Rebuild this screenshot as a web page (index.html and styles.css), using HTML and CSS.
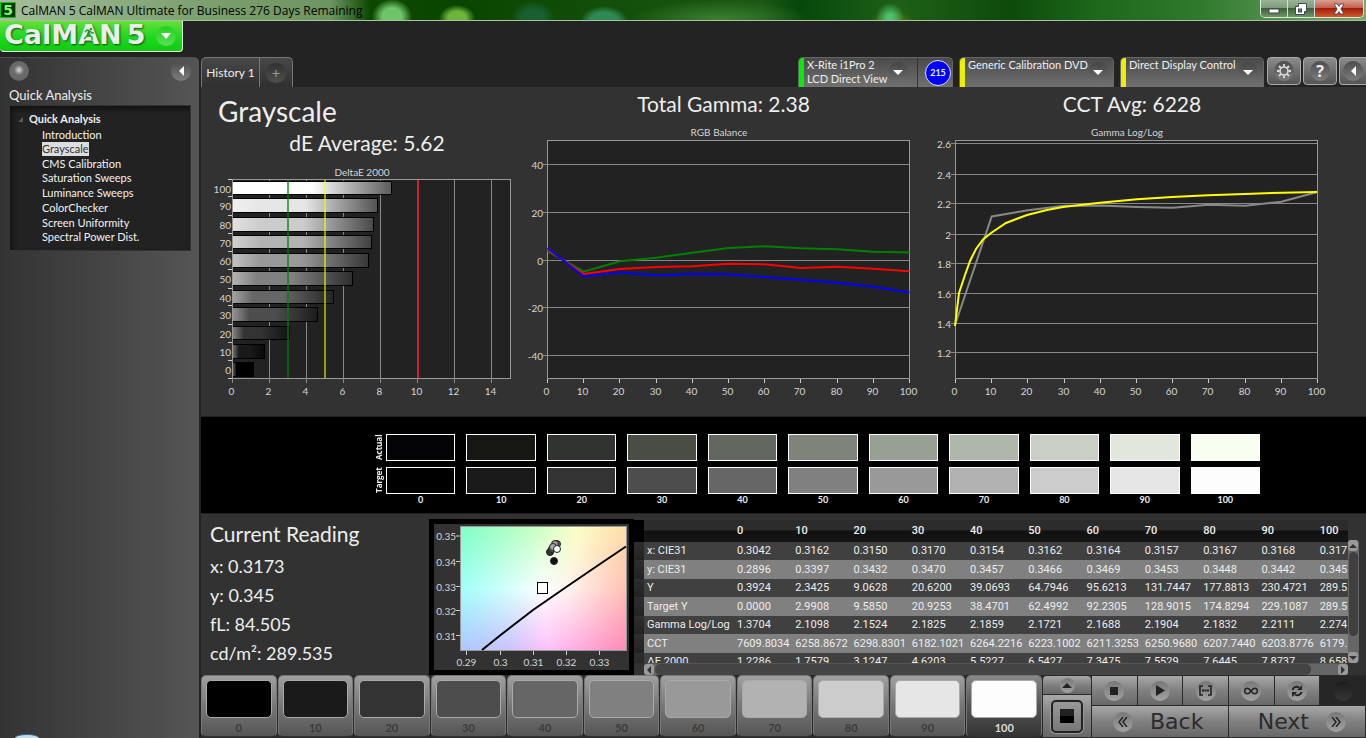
FILE: index.html
```html
<!DOCTYPE html>
<html lang="en">
<head>
<meta charset="utf-8">
<title>CalMAN 5</title>
<link rel="stylesheet" href="styles.css">
</head>
<body>
<div class="app">
  <header class="titlebar">
    <span class="app-icon">5</span>
    <span class="titlebar-text">CalMAN 5 CalMAN Ultimate for Business 276 Days Remaining</span>
    <div class="window-buttons">
      <button class="win-btn" aria-label="Minimize"><svg width="12" height="12" viewBox="0 0 12 12"><rect x="1" y="6" width="10" height="4" fill="#fff" stroke="#445" stroke-width="1"/></svg></button>
      <button class="win-btn" aria-label="Restore"><svg width="12" height="12" viewBox="0 0 12 12"><path d="M3.500.5h8v8h-2v3h-9v-8h3z" fill="#fff" stroke="#445"/><rect x="3.500" y="6" width="3" height="3" fill="#687" stroke="#445"/></svg></button>
      <button class="win-btn win-close" aria-label="Close"><svg width="12" height="12" viewBox="0 0 12 12"><path d="M1 1h3.400L6 3.400 7.600 1H11L7.900 6 11 11H7.600L6 8.600 4.400 11H1l3.100-5z" fill="#fff" stroke="#434" stroke-width=".8"/></svg></button>
    </div>
  </header>

  <div class="workspace">
    <aside class="left">
      <button class="logo" aria-label="CalMAN 5 menu">
        <span class="logo-text">CalMAN</span><span class="logo-text logo-five">5</span>
        <svg class="logo-runner" width="14" height="17" viewBox="0 0 14 17"><path d="M8 6 5 5 3 7M8 6l-2 4-4 4M7 10l3 2v3M8 6l2 2h2" fill="none" stroke="#1da51d" stroke-width="1.400"/><circle cx="9" cy="4" r="1.300" fill="#1da51d"/></svg>
        <span class="logo-drop"><svg width="10" height="6" viewBox="0 0 10 6"><path d="M0 0h10L5 6z" fill="#fff"/></svg></span>
      </button>
      <nav class="sidebar">
        <div class="side-top">
          <button class="round orb" aria-label="Record"></button>
          <button class="round" aria-label="Collapse panel"><svg width="5" height="10" viewBox="0 0 5 10"><path d="M5 0v10L0 5z" fill="#fff"/></svg></button>
        </div>
        <h2 class="side-title">Quick Analysis</h2>
        <div class="tree">
          <div class="tree-root"><svg width="5" height="5" viewBox="0 0 5 5"><path d="M5 0v5H0z" fill="#555"/></svg>Quick Analysis</div>
          <ul class="tree-list">
            <li><a href="#">Introduction</a></li>
            <li><a href="#" class="selected">Grayscale</a></li>
            <li><a href="#">CMS Calibration</a></li>
            <li><a href="#">Saturation Sweeps</a></li>
            <li><a href="#">Luminance Sweeps</a></li>
            <li><a href="#">ColorChecker</a></li>
            <li><a href="#">Screen Uniformity</a></li>
            <li><a href="#">Spectral Power Dist.</a></li>
          </ul>
        </div>
        <div class="start-orb"></div>
      </nav>
    </aside>

    <main class="main">
      <div class="toolbar">
        <div class="tabs">
          <button class="tab">History 1</button>
          <button class="tab tab-add" aria-label="Add tab"><span class="add">+</span></button>
        </div>
        <div class="devices">
          <div class="device meter">
            <button class="device-btn green"><span>X-Rite i1Pro 2<br>LCD Direct View</span><span class="drop"></span></button>
            <span class="badge-cell"><span class="badge">215</span></span>
          </div>
          <div class="device source"><button class="device-btn yellow"><span>Generic Calibration DVD</span><span class="drop"></span></button></div>
          <div class="device display"><button class="device-btn yellow"><span>Direct Display Control</span><span class="drop"></span></button></div>
          <button class="tool" aria-label="Settings"><span class="round"><svg width="14" height="14" viewBox="0 0 14 14"><circle cx="7" cy="7" r="4" fill="none" stroke="#ddd" stroke-width="1.600"/><g stroke="#ddd" stroke-width="1.800"><path d="M7 0v2.500M7 11.500V14M0 7h2.500M11.500 7H14M2 2l1.800 1.800M10.200 10.200 12 12M12 2l-1.800 1.800M3.800 10.200 2 12"/></g></svg></span></button>
          <button class="tool" aria-label="Help"><span class="round help">?</span></button>
          <button class="tool tool-cut" aria-label="Expand"><span class="round"><svg width="5" height="10" viewBox="0 0 5 10"><path d="M5 0v10L0 5z" fill="#fff"/></svg></span></button>
        </div>
      </div>

      <section class="charts">
        <div class="chart-col chart-first">
          <h1 class="page-title">Grayscale</h1>
          <h2 class="stat stat-de">dE Average: 5.62</h2>
          <svg class="chart" id="delta" viewBox="201 160 320 240" role="img" aria-label="DeltaE 2000"></svg>
        </div>
        <div class="chart-col">
          <h2 class="stat">Total Gamma: 2.38</h2>
          <svg class="chart" id="rgb" viewBox="521 120 405 280" role="img" aria-label="RGB Balance"></svg>
        </div>
        <div class="chart-col">
          <h2 class="stat stat-cct">CCT Avg: 6228</h2>
          <svg class="chart" id="gamma" viewBox="926 120 440 280" role="img" aria-label="Gamma Log/Log"></svg>
        </div>
      </section>

      <section class="band">
        <div class="swatches" id="swatches">
          <span class="vlabel">Actual</span>
        </div>
      </section>

      <section class="reading">
        <div class="current">
          <h2>Current Reading</h2>
          <p>x: 0.3173</p>
          <p>y: 0.345</p>
          <p>fL: 84.505</p>
          <p>cd/m²: 289.535</p>
        </div>
        <div class="cie">
          <div class="cie-inner">
            <svg class="chart" id="cie" viewBox="434 524 195 147" role="img" aria-label="CIE chart">
              <defs>
                <linearGradient id="cg1" x1="0" y1="0" x2="1" y2="0"><stop offset="0" stop-color="#80ffc4"/><stop offset=".35" stop-color="#b2ffc2"/><stop offset=".7" stop-color="#fbffc4"/><stop offset="1" stop-color="#ffdda8"/></linearGradient>
                <linearGradient id="cg2" x1="0" y1="0" x2="1" y2="0"><stop offset="0" stop-color="#acc6ff"/><stop offset=".3" stop-color="#ccc2ff"/><stop offset=".52" stop-color="#ffc0fa"/><stop offset="1" stop-color="#ff88b6"/></linearGradient>
                <linearGradient id="cg3" x1="0" y1="0" x2="1" y2="0"><stop offset="0" stop-color="#a0fffa"/><stop offset=".5" stop-color="#fdffff"/><stop offset=".65" stop-color="#fff4f0"/><stop offset="1" stop-color="#ffc0b4"/></linearGradient>
                <linearGradient id="fade" x1="0" y1="0" x2="0" y2="1"><stop offset="0" stop-color="#fff"/><stop offset=".5" stop-color="#000"/></linearGradient>
                <linearGradient id="fade2" x1="0" y1="0" x2="0" y2="1"><stop offset=".5" stop-color="#000"/><stop offset="1" stop-color="#fff"/></linearGradient>
                <mask id="m1"><rect x="460" y="526" width="168" height="125" fill="url(#fade)"/></mask>
                <mask id="m2"><rect x="460" y="526" width="168" height="125" fill="url(#fade2)"/></mask>
              </defs>
              <rect x="460" y="526" width="167" height="124" fill="url(#cg3)"/>
              <rect x="460" y="526" width="167" height="124" fill="url(#cg1)" mask="url(#m1)"/>
              <rect x="460" y="526" width="167" height="124" fill="url(#cg2)" mask="url(#m2)"/>
              <rect x="460.500" y="526.500" width="166" height="124" fill="none" stroke="#999"/>
              <path d="M482 650 500 635.500 533 610 567 586.500 600 564 626 546.500" fill="none" stroke="#000" stroke-width="2"/>
              <rect x="537.500" y="582.500" width="10" height="11" fill="#fff" stroke="#000"/>
              <g stroke="#222"><circle cx="554" cy="561" r="3.500" fill="#111"/><circle cx="550" cy="552" r="3.500" fill="#333"/><circle cx="552" cy="549" r="3.500" fill="#555"/><circle cx="557" cy="544" r="3.500" fill="#666"/><circle cx="555" cy="544" r="3.500" fill="#999"/><circle cx="553" cy="547" r="3.500" fill="#aaa"/><circle cx="557" cy="549" r="3.500" fill="#fff"/></g>
            </svg>
          </div>
        </div>
        <div class="grid-wrap">
          <div class="grid-view">
            <table class="grid"><colgroup><col class="c-handle"><col class="c-label"></colgroup><thead></thead><tbody></tbody></table>
          </div>
          <div class="vscroll"><span class="sb up"></span><span class="vthumb"></span><span class="sb down"></span></div>
          <div class="hscroll"><span class="sb lft"></span><span class="hthumb"></span><span class="sb rgt"></span></div>
        </div>
      </section>

      <footer class="bottom">
        <div class="patches" id="patches"></div>
        <div class="pattern">
          <button class="ctl pat-up" aria-label="Show patterns"><span class="knob small"><svg width="10" height="5" viewBox="0 0 10 5"><path d="M0 5h10L5 0z" fill="#222"/></svg></span></button>
          <button class="ctl pat-win" aria-label="Pattern window"><span class="pat-frame"><span class="pat-core"></span></span></button>
        </div>
        <div class="transport">
          <button class="ctl" aria-label="Stop"><span class="knob"><svg width="8" height="8"><rect width="8" height="8" fill="#222"/></svg></span></button>
          <button class="ctl" aria-label="Read"><span class="knob"><svg width="10" height="11" viewBox="0 0 10 11"><path d="M1 0v11l9-5.500z" fill="#222"/></svg></span></button>
          <button class="ctl" aria-label="Read series"><span class="knob"><svg width="13" height="11" viewBox="0 0 13 11"><path d="M4 1H1v9h3M9 1h3v9H9" fill="none" stroke="#222" stroke-width="1.600"/><path d="M3 4.500h2v2H3zM5.500 4.500h2v2h-2zM8 4.500h2v2H8z" fill="#222"/></svg></span></button>
          <button class="ctl" aria-label="Read continuous"><span class="knob"><svg width="14" height="8" viewBox="0 0 14 8"><path d="M7 4C5.500 2 4.600 1.200 3.400 1.200a2.800 2.800 0 0 0 0 5.600C4.600 6.800 5.500 6 7 4s2.400-2.800 3.600-2.800a2.800 2.800 0 0 1 0 5.600C9.400 6.800 8.500 6 7 4z" fill="none" stroke="#222" stroke-width="1.500"/></svg></span></button>
          <button class="ctl" aria-label="Refresh"><span class="knob"><svg width="12" height="12" viewBox="0 0 12 12"><path d="M1.500 5C2 2.500 5 .8 8 2.500M10.500 7C10 9.500 7 11.200 4 9.500" fill="none" stroke="#222" stroke-width="2"/><path d="M11 0v5H6zM1 12V7h5z" fill="#222"/></svg></span></button>
          <button class="ctl off" aria-label="Idle"><span class="knob"></span></button>
          <button class="ctl nav-btn"><span class="knob"><svg width="10" height="10" viewBox="0 0 10 10"><path d="M5 0 1 5l4 5M9 0 5 5l4 5" fill="none" stroke="#222" stroke-width="1.400"/></svg></span>Back</button>
          <button class="ctl nav-btn next">Next<span class="knob"><svg width="10" height="10" viewBox="0 0 10 10"><path d="m1 0 4 5-4 5M5 0l4 5-4 5" fill="none" stroke="#222" stroke-width="1.400"/></svg></span></button>
        </div>
      </footer>
    </main>
  </div>
</div>
<script src="app.js"></script>
</body>
</html>
```
FILE: styles.css
```css
* { box-sizing: border-box; }
body { margin: 0; background: #232323; color: #eee; font-family: Lato, "Open Sans", sans-serif; font-size: 11px; }
button { font: inherit; color: inherit; border: 0; padding: 0; margin: 0; background: none; }
h1, h2, p, ul { margin: 0; padding: 0; font-weight: 400; }
svg { display: block; flex: none; }
.app { display: flex; flex-direction: column; min-height: 100vh; }

/* Window title bar */
.titlebar { display: flex; align-items: center; height: 21px; border-bottom: 1px solid #a3c39a; color: #000;
  background:
    linear-gradient(90deg, rgba(190,208,180,.85) 0, rgba(150,180,135,.8) 200px, rgba(150,180,135,.7) 330px, rgba(60,110,45,0) 370px),
    radial-gradient(ellipse 20px 18px at 392px 17px, #6ec468 50%, transparent),
    radial-gradient(ellipse 18px 13px at 457px 18px, #6cb53a 50%, transparent),
    radial-gradient(ellipse 22px 17px at 533px 18px, #186030 50%, transparent),
    radial-gradient(ellipse 24px 16px at 604px 22px, #2d8a55 60%, transparent),
    radial-gradient(ellipse 14px 14px at 890px 17px, #4cc06c 20%, transparent),
    radial-gradient(ellipse 22px 10px at 892px 21px, #557a10 20%, transparent),
    radial-gradient(ellipse 90px 20px at 720px 20px, #3f7f33, transparent),
    linear-gradient(90deg, #1a5a10 0, #0a4500 450px, #1b5814 760px, #06480a 800px, #1e6018 900px, #0e4a0a 1010px, #1d6a1d 1100px, #2f7a2c 1200px, #7aa873 100%); }
.app-icon { width: 16px; height: 16px; margin-right: 5px; background: #003800; border: 1px solid #0c0; color: #7dff6a; font: bold 14px/14px "DejaVu Sans", sans-serif; text-align: center; }
.titlebar-text { flex: 1; font-family: "Open Sans", sans-serif; font-size: 12px; white-space: nowrap; }
.window-buttons { align-self: flex-start; display: flex; height: 18px; margin-right: 2px; border: 1px solid #dce8d8; border-top: 0; border-radius: 0 0 5px 5px; overflow: hidden; }
.win-btn { display: grid; place-items: center; width: 27px; border-right: 1px solid #cdd; background: linear-gradient(#9bb397, #7f9b7b 45%, #3c6038 50%, #6f9569); }
.win-close { width: 48px; border-right: 0; background: linear-gradient(#d9a090, #c4604c 45%, #a31e0a 50%, #cf5a30); }

.workspace { flex: 1; display: flex; }
.left { flex: none; width: 201px; display: flex; flex-direction: column; }
.main { flex: 1; min-width: 0; display: flex; flex-direction: column; }

/* Logo */
.logo { position: relative; display: flex; align-items: center; width: 183px; height: 31px; padding: 0 0 4px 4px; border: 1px solid #e8ffe8; border-top: 0; border-left: 0; border-radius: 0 0 4px 4px; background: linear-gradient(#66e03a, #22d822 50%, #0fcb0f); }
.logo-text { font: bold 27px/27px "DejaVu Sans", sans-serif; color: #e9eee9; text-shadow: 1px 1px 2px #164a16; }
.logo-five { margin-left: 5px; }
.logo-runner { position: absolute; left: 82px; top: 4px; }
.logo-drop { display: grid; place-items: center; width: 20px; height: 20px; margin: 4px 0 0 11px; border-radius: 50%; background: linear-gradient(#1fd01f, #58e058); }

/* Sidebar */
.sidebar { flex: 1; display: flex; flex-direction: column; margin: 5px 2px 0 0; border-top: 1px solid #4c4c4c; border-radius: 0 5px 0 0; background: linear-gradient(90deg, #333, #555); overflow: hidden; }
.side-top { display: flex; justify-content: space-between; padding: 3px 8px 0 9px; }
.round { display: grid; place-items: center; width: 20px; height: 20px; border-radius: 50%; background: linear-gradient(#4c4c4c, #7d7d7d); }
.orb { background: radial-gradient(circle at 50% 45%, #ddd 0, #999 3px, #6d6d6d 5px, #606060); }
.side-title { padding: 4px 9px 0; font-size: 13px; line-height: 20px; }
.tree { margin: 0 8px 0 9px; padding: 5px 0 4px 8px; height: 146px; border: 1px solid #333; background: #222; box-shadow: inset 2px 3px 5px #111; }
.tree-root { display: flex; align-items: center; gap: 6px; font-weight: 700; line-height: 16px; }
.tree-list { list-style: none; padding-left: 24px; }
.tree-list li { height: 15px; line-height: 15px; }
.tree-list li:nth-child(odd) { height: 14px; }
.tree-list li:nth-child(5) { height: 15px; }
.tree-list a { display: inline-block; height: 14px; line-height: 14px; color: #f2f2f2; text-decoration: none; }
.tree-list .selected { background: #ddd; color: #333; }
.start-orb { width: 24px; height: 4px; margin: auto 0 0 15px; border-top: 1px solid #2b6a94; border-radius: 50% 50% 0 0 / 100% 100% 0 0; background: #c4dcea; }

/* Toolbar */
.toolbar { display: flex; justify-content: space-between; align-items: flex-end; height: 66px; }
.tabs { display: flex; height: 30px; border: 1px solid #777; border-bottom: 0; border-radius: 5px 5px 0 0; background: linear-gradient(#484848, #303030); }
.tab { width: 57px; font-size: 12px; white-space: nowrap; }
.tab-add { width: 33px; border-left: 1px solid #777; display: grid; place-items: center; }
.add { width: 20px; height: 20px; border-radius: 50%; background: linear-gradient(#303030, #505050); color: #999; font: 15px/20px "Noto Sans", sans-serif; }
.devices { display: flex; align-items: flex-end; }
.device { display: flex; height: 30px; margin-right: 6px; border: 1px solid #666; border-bottom: 0; border-radius: 5px 5px 0 0; background: linear-gradient(#4a4a4a, #707070); overflow: hidden; }
.meter { width: 155px; }
.source { width: 155px; }
.display { width: 144px; margin-right: 3px; }
.device-btn { flex: 1; display: flex; justify-content: space-between; align-items: flex-start; padding: 0 5px 0 3px; border-left: 5px solid #0e0; text-align: left; line-height: 14px; white-space: nowrap; }
.device-btn.yellow { border-left-color: #ee0; }
.drop { display: grid; place-items: center; width: 20px; height: 20px; margin-top: 4px; border-radius: 50%; background: linear-gradient(#454545, #6c6c6c); }
.drop::before { content: ""; border: 5px solid transparent; border-top-color: #fff; border-bottom: 0; }
.meter .device-btn { padding-right: 9px; }
.badge-cell { width: 35px; display: grid; place-items: center end; padding-right: 1px; border-left: 1px solid #333; }
.badge { width: 26px; height: 26px; border: 1px solid #dde; border-radius: 50%; background: #00f; font-size: 9px; font-weight: 700; line-height: 24px; text-align: center; }
.tool { display: grid; place-items: center; width: 34px; height: 28px; margin: 0 2px 2px 0; border: 1px solid #aaa; border-radius: 4px; background: linear-gradient(#8a8a8a, #555); }
.tool-cut { width: 27px; margin-right: 0; border-right: 0; border-radius: 4px 0 0 4px; }
.help { font: bold 16px/20px "Noto Sans", sans-serif; }

/* Charts */
.charts { display: grid; grid-template-columns: 320fr 405fr 440fr; height: 329px; background: #323232; }
.chart-col { display: flex; flex-direction: column; padding-top: 3px; }
.chart { width: 100%; height: auto; }
.chart text { font-size: 10px; fill: #d5d5d5; }
.stat { height: 30px; font-size: 21px; line-height: 27px; text-align: center; }
.stat-cct { padding-right: 28px; }
.page-title { padding: 5px 0 0 17px; font-size: 28px; line-height: 33px; }
.stat-de { height: 32px; padding-left: 12px; line-height: 29px; }

/* Actual and target swatches */
.band { height: 98px; padding: 17px 95px 0 171px; background: #000; border-top: 1px solid #222; border-bottom: 1px solid #222; }
.swatches { display: grid; grid-template-columns: 14px repeat(11, 1fr); grid-template-rows: 33px 27px 12px; font-size: 9px; font-weight: 700; }
.vlabel { height: 27px; font-family: "Open Sans", sans-serif; font-size: 8px; writing-mode: vertical-rl; transform: rotate(180deg); text-align: center; line-height: 14px; }
.swatch { height: 27px; margin-right: 11px; border: 1px solid #fff; }
.slabel { margin-right: 11px; line-height: 12px; text-align: center; }

/* Current reading row */
.reading { display: flex; height: 161px; background: #323232; }
.current { width: 228px; padding: 6px 0 0 9px; font-size: 18px; line-height: 29px; white-space: nowrap; }
.current h2 { font-size: 21px; line-height: 28px; padding-bottom: 4px; }
.cie { flex: none; width: 205px; height: 156px; margin-top: 5px; border: 5px solid #000; background: #323232; }
.grid-wrap { flex: 1; min-width: 0; display: grid; grid-template-columns: 1fr 11px; grid-template-rows: 143px 12px; margin: 6px 7px 0 0; }
.grid-view { overflow: hidden; min-width: 0; }
.grid { width: 740px; table-layout: fixed; border-collapse: collapse; font-family: Roboto, "Noto Sans", sans-serif; font-size: 11px; background: #404040; }
.c-handle { width: 10px; }
.c-label { width: 89px; }
.grid th, .grid td { padding: 0 0 0 4px; height: 18px; line-height: 18px; text-align: left; white-space: nowrap; font-weight: 400; }
.grid tbody th { padding-left: 3px; }
.grid thead th { height: 22px; line-height: 20px; font-weight: 500; background: linear-gradient(#2c2c2c 45%, #111 50%, #151515); }
.grid thead th:first-child { background: #000; }
.grid tbody tr:nth-child(even) { background: #808080; }
.grid tbody tr:nth-child(even) > * { height: 19px; }
.grid tbody tr > :first-child { background: linear-gradient(#2e2e2e, #222); }
.vscroll, .hscroll { display: flex; background: #666; }
.vscroll { flex-direction: column; margin-top: 20px; border-radius: 4px; }
.hscroll { margin-left: 10px; border-top: 1px solid #555; border-radius: 4px; }
.sb { flex: none; display: grid; place-items: center; width: 10px; height: 11px; border-radius: 3px; background: #999; }
.sb::before { content: ""; border: 4px solid transparent; }
.up::before { border-bottom-color: #333; border-top: 0; }
.down::before { border-top-color: #333; border-bottom: 0; }
.lft::before { border-right-color: #333; border-left: 0; }
.rgt::before { border-left-color: #333; border-right: 0; }
.vthumb { height: 84px; margin: 1px 1px auto; border-radius: 5px; background: #404040; }
.hthumb { flex: 1; margin: 0 27px 0 1px; border-radius: 5px; background: #444; }

/* Bottom bar */
.bottom { flex: 1; display: flex; min-height: 63px; padding-bottom: 1px; background: #2a2a2a; }
.patches { flex: 1; display: grid; grid-template-columns: repeat(11, 1fr); gap: 1px; }
.patch { display: flex; flex-direction: column; justify-content: space-between; padding: 4px 4px 0; border: 1px solid #777; border-bottom-color: #333; border-radius: 5px; background: linear-gradient(#a0a0a0, #777 50%, #555); color: #3c3c3c; font-weight: 700; line-height: 16px; }
.patch-color { display: block; height: 38px; border: 1px solid #aaa; border-radius: 5px; }
.patch.active { background: linear-gradient(#888, #555 50%, #333); color: #ddd; }
.pattern { flex: none; width: 48px; display: flex; flex-direction: column; gap: 1px; margin: 1px 1px 0; }
.ctl { display: flex; align-items: center; justify-content: center; background: linear-gradient(#a8a8a8, #808080 50%, #686868); }
.pat-up { height: 18px; border-radius: 4px 4px 0 0; }
.pat-win { flex: 1; }
.pat-frame { display: grid; place-items: center; width: 32px; height: 33px; border: 2px solid #222; border-radius: 5px; background: linear-gradient(#999, #777); box-shadow: 0 0 0 1px #999; }
.pat-core { width: 14px; height: 14px; background: linear-gradient(#222 50%, #000 50%); }
.transport { flex: none; width: 273px; display: grid; grid-template-columns: repeat(6, 1fr); grid-template-rows: 29px 1fr; gap: 1px; margin: 1px 1px 0 0; }
.knob { display: grid; place-items: center; width: 20px; height: 20px; border-radius: 50%; background: linear-gradient(#787878, #a2a2a2); }
.knob.small { width: 15px; height: 15px; }
.off { background: #262626; }
.off .knob { background: linear-gradient(#1c1c1c, #363636); }
.nav-btn { grid-column: span 3; justify-content: flex-start; gap: 17px; padding-left: 21px; color: #2b2b2b; font: 22px/28px "DejaVu Sans", "Noto Sans", sans-serif; }
.nav-btn.next { justify-content: flex-end; padding: 0 19px 0 0; }
```
FILE: app.js
```js
const NS = 'http://www.w3.org/2000/svg';
const levels = [0, 10, 20, 30, 40, 50, 60, 70, 80, 90, 100];
const grays = ['#000', '#1a1a1a', '#333', '#4d4d4d', '#666', '#808080', '#999', '#b2b2b2', '#ccc', '#e6e6e6', '#fdfdfd'];
const actual = ['#040406', '#171813', '#30332f', '#4a4d43', '#626860', '#7e8479', '#98a094', '#afb6aa', '#c9cfc4', '#e1e7da', '#f8fff0'];

function add(parent, tag, attrs, text) {
  const el = document.createElementNS(NS, tag);
  for (const k in attrs) el.setAttribute(k, attrs[k]);
  if (text !== undefined) el.textContent = text;
  parent.appendChild(el);
  return el;
}
const line = (p, x1, y1, x2, y2, c = '#888') => add(p, 'line', { x1, y1, x2, y2, stroke: c });
const label = (p, x, y, t, a = 'middle') => add(p, 'text', { x, y, 'text-anchor': a }, t);
const poly = (p, pts, c) => add(p, 'polyline', { points: pts.map(q => q.join()).join(' '), fill: 'none', stroke: c, 'stroke-width': 2 });

/* DeltaE bars */
const d = document.getElementById('delta');
label(d, 362, 176, 'DeltaE 2000');
add(d, 'rect', { x: 232.5, y: 179.5, width: 278, height: 199, fill: '#222', stroke: '#999' });
for (let v = 0; v <= 14; v += 2) {
  const x = Math.round(232 + v * 18.5) + 0.5;
  line(d, x, 180, x, 383);
  label(d, x - 1, 395, v);
}
const bars = [[391, 181, 13], [377, 198, 14], [373, 217, 14], [371, 235, 13], [368, 253, 14], [352, 271, 14], [333, 290, 13], [317, 307, 14], [289, 326, 13], [264, 344, 14], [253, 362, 14]];
const defs = add(d, 'defs', {});
bars.forEach(([x2, y, h], i) => {
  const g = Math.round((10 - i) * 25.5);
  const lite = Math.round(g + (255 - g) * 0.4);
  const dark = Math.round(g * 0.36);
  const grad = add(defs, 'linearGradient', { id: 'bar' + i });
  [[0, lite], [0.2, g], [0.5, g], [1, dark]].forEach(([o, c]) => add(grad, 'stop', { offset: o, 'stop-color': `rgb(${c},${c},${c})` }));
  add(d, 'rect', { x: 232.5, y: y + 0.5, width: x2 - 232, height: h, fill: `url(#bar${i})`, stroke: '#000' });
  label(d, 231, y + 12, 100 - i * 10, 'end');
  line(d, 228, y - 1.5, 232, y - 1.5, '#ccc');
});
line(d, 228, 378.5, 232, 378.5, '#ccc');
line(d, 232.5, 179, 232.5, 379, '#999');
add(d, 'rect', { x: 287, y: 180, width: 2, height: 198, fill: 'rgba(0,128,0,.65)' });
add(d, 'rect', { x: 324, y: 180, width: 2, height: 198, fill: 'rgba(255,255,0,.55)' });
add(d, 'rect', { x: 417, y: 180, width: 2, height: 198, fill: '#c22' });

/* Line charts share one frame */
function frame(svg, x0, title, rows) {
  label(svg, x0 + 172, 136, title);
  add(svg, 'rect', { x: x0 + 0.5, y: 140.5, width: 362, height: 238, fill: '#222', stroke: '#999' });
  rows.forEach(([t, y]) => {
    line(svg, x0 - 4, y, x0 + 362, y);
    label(svg, x0 - 4, y + 4, t, 'end');
  });
  levels.forEach((v, i) => {
    const x = x0 + Math.round(i * 36.2) + 0.5;
    line(svg, x, 379, x, 383, '#ccc');
    label(svg, x - 1, 395, v);
  });
}
const series = (x0, ys) => ys.map((y, i) => [x0 + i * 36.2, y]);
const r = document.getElementById('rgb');
frame(r, 547, 'RGB Balance', [[40, 164.5], [20, 212.5], [0, 260.5], [-20, 307.5], [-40, 355.5]]);
poly(r, series(547.5, [251, 271.7, 261.3, 257.7, 252.7, 248, 246.3, 248.3, 249.3, 251.7, 252.5]), '#008000');
poly(r, series(547.5, [249.5, 274, 269, 267, 266.3, 263.7, 264.3, 268, 266.7, 268.7, 271.3]), '#f00');
poly(r, series(547.5, [248, 276.5, 272.3, 275.5, 274, 274.3, 277, 279.7, 282.7, 286.7, 292.5]), '#00f');

const g = document.getElementById('gamma');
frame(g, 955, 'Gamma Log/Log', [['2.6', 143.5], ['2.4', 174.5], ['2.2', 203.5], ['2', 234.5], ['1.8', 263.5], ['1.6', 293.5], ['1.4', 323.5], ['1.2', 352.5]]);
poly(g, series(955.5, [323.5, 216.5, 210.3, 205.7, 205.5, 207, 207.7, 204.7, 205.7, 201.7, 192]), '#888');
poly(g, [[955, 326], [959, 293], [965, 275], [970, 261], [976, 249], [983, 239.5], [991, 233], [1006, 223], [1027, 215], [1047, 210], [1063, 207], [1100, 202.7], [1137, 199.3], [1172, 197], [1208, 195.3], [1245, 194], [1282, 192.7], [1317, 192]], '#ff0');

/* CIE chart axes */
const c = document.getElementById('cie');
[['0.35', 536], ['0.34', 561.5], ['0.33', 586.5], ['0.32', 610.5], ['0.31', 635.5]].forEach(([t, y]) => {
  line(c, 456, y, 460, y, '#ccc');
  label(c, 456, y + 4, t, 'end');
});
[['0.29', 466.5], ['0.3', 500.5], ['0.31', 533.5], ['0.32', 566.5], ['0.33', 599.5]].forEach(([t, x]) => {
  line(c, x, 651, x, 655, '#ccc');
  label(c, x, 666, t);
});

/* Swatch rows */
const sw = document.getElementById('swatches');
function html(parent, tag, cls, text) {
  const el = document.createElement(tag);
  if (cls) el.className = cls;
  if (text !== undefined) el.textContent = text;
  parent.appendChild(el);
  return el;
}
actual.forEach(col => { html(sw, 'span', 'swatch').style.background = col; });
html(sw, 'span', 'vlabel', 'Target');
grays.forEach(col => { html(sw, 'span', 'swatch').style.background = col; });
html(sw, 'span');
levels.forEach(v => html(sw, 'span', 'slabel', v));

/* Patch buttons */
const patches = document.getElementById('patches');
levels.forEach((v, i) => {
  const b = html(patches, 'button', v === 100 ? 'patch active' : 'patch');
  html(b, 'span', 'patch-color').style.background = grays[i];
  html(b, 'span', '', v);
});

/* Readings table */
const rows = [
  ['x: CIE31', '0.3042', '0.3162', '0.3150', '0.3170', '0.3154', '0.3162', '0.3164', '0.3157', '0.3167', '0.3168', '0.317'],
  ['y: CIE31', '0.2896', '0.3397', '0.3432', '0.3470', '0.3457', '0.3466', '0.3469', '0.3453', '0.3448', '0.3442', '0.345'],
  ['Y', '0.3924', '2.3425', '9.0628', '20.6200', '39.0693', '64.7946', '95.6213', '131.7447', '177.8813', '230.4721', '289.5'],
  ['Target Y', '0.0000', '2.9908', '9.5850', '20.9253', '38.4701', '62.4992', '92.2305', '128.9015', '174.8294', '229.1087', '289.5'],
  ['Gamma Log/Log', '1.3704', '2.1098', '2.1524', '2.1825', '2.1859', '2.1721', '2.1688', '2.1904', '2.1832', '2.2111', '2.274'],
  ['CCT', '7609.8034', '6258.8672', '6298.8301', '6182.1021', '6264.2216', '6223.1002', '6211.3253', '6250.9680', '6207.7440', '6203.8776', '6179.'],
  ['ΔE 2000', '1.2286', '1.7579', '3.1247', '4.6203', '5.5227', '6.5427', '7.3475', '7.5529', '7.6445', '7.8737', '8.658']
];
const table = document.querySelector('.grid');
const head = html(table.tHead, 'tr');
html(head, 'th');
html(head, 'th');
levels.forEach(v => html(head, 'th', '', v));
rows.forEach(row => {
  const tr = html(table.tBodies[0], 'tr');
  html(tr, 'td');
  row.forEach((t, i) => html(tr, i ? 'td' : 'th', '', t));
});
```
